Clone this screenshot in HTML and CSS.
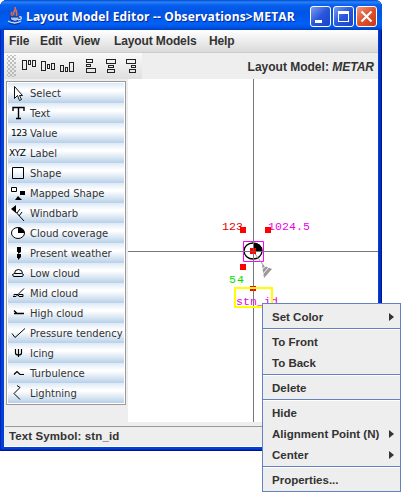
FILE: index.html
```html
<!DOCTYPE html>
<html lang="en">
<head>
<meta charset="utf-8">
<title>Layout Model Editor</title>
<link rel="stylesheet" href="styles.css">
</head>
<body>
<div class="window">
  <header class="titlebar">
    <svg class="logo" width="16" height="18" viewBox="0 0 16 18" fill="none">
      <path d="M8 0c2 3-3 4-1 8M10 3c-3 2 2 3-1 6M5 5c-2 2 1 3 0 4" stroke="#f36b2c" stroke-width="1.5"/>
      <path d="M3 10h9v3q-4 3-8 0z" fill="#a9c4f0" stroke="#182c78"/>
      <path d="M12 10q3-1 2 2l-3 1M1 14q7 4 13 0" stroke="#d4e0f8" stroke-width="1.3"/>
      <path d="M2 16.500q6 2 11 0" stroke="#182c78"/>
    </svg>
    <h1 class="title">Layout Model Editor -- Observations&gt;METAR</h1>
    <div class="controls">
      <span class="control"><svg width="19" height="19"><path d="M4 13h7v3H4z" fill="#fff"/></svg></span>
      <span class="control"><svg width="19" height="19"><path d="M4 4h11v11H4zM5 7v7h9V7z" fill="#fff" fill-rule="evenodd"/></svg></span>
      <span class="control close"><svg width="19" height="19"><path d="M4.500 4.500l10 10M14.500 4.500l-10 10" stroke="#fff" stroke-width="2.200"/></svg></span>
    </div>
  </header>
  <nav class="menubar"><span class="m-file">File</span><span class="m-edit">Edit</span><span class="m-view">View</span><span class="m-models">Layout Models</span><span>Help</span></nav>
  <div class="toolbar">
    <div class="tools">
      <span class="grip"></span>
      <svg width="120" height="20" viewBox="20 55 120 20" fill="none" stroke="#222" shape-rendering="crispEdges">
        <path d="M22.500 59.500h4v9h-4zM28.500 59.500h2v4h-2zM32.500 59.500h3v6h-3z"/>
        <path d="M41.500 60.500h4v9h-4zM47.500 63.500h2v4h-2zM51.500 62.500h3v6h-3z"/>
        <path d="M60.500 64.500h3v6h-3zM65.500 66.500h2v4h-2zM69.500 61.500h4v9h-4z"/>
        <path d="M86.500 58.500h6v3h-6zM86.500 63.500h4v2h-4zM86.500 67.500h9v4h-9z"/>
        <path d="M106.500 58.500h9v4h-9zM108.500 64.500h5v2h-5zM107.500 68.500h7v3h-7z"/>
        <path d="M126.500 58.500h9v4h-9zM131.500 64.500h4v2h-4zM129.500 68.500h6v3h-6z"/>
      </svg>
    </div>
    <div class="model">Layout Model: <i>METAR</i></div>
  </div>
  <main class="workspace">
    <ul class="palette">
      <li><svg width="20" height="20"><path d="M6.500 3.500v12l3-3 2 5 2-1-2-4h3z" fill="#fff" stroke="#111"/></svg><span>Select</span></li>
      <li><svg width="20" height="20"><path d="M5 8V4.500h11V8M10.500 5v11M8 15.500h5" fill="none" stroke="#000" stroke-width="1.400"/></svg><span>Text</span></li>
      <li><b class="glyph digits">123</b><span>Value</span></li>
      <li><b class="glyph">XYZ</b><span>Label</span></li>
      <li><svg width="20" height="20"><path d="M4.500 4.500h11v11h-11z" fill="none" stroke="#000"/></svg><span>Shape</span></li>
      <li><svg width="20" height="20"><path d="M3.500 4.500h5v4h-5z" fill="#fff" stroke="#000"/><path d="M12 8h5v4h-5zM10 13l4 4H7z"/></svg><span>Mapped Shape</span></li>
      <li><svg width="20" height="20"><path d="M8 2v8L3 6z"/><path d="M6 7l10 11M9 10l3-4M11 13l3-4" stroke="#000" fill="none"/></svg><span>Windbarb</span></li>
      <li><svg width="20" height="20"><ellipse cx="10" cy="10" rx="6.500" ry="5.500" fill="#fff" stroke="#000"/><path d="M10 10V4.500q6 0 6.500 5.500z"/></svg><span>Cloud coverage</span></li>
      <li><svg width="20" height="20"><path d="M9 4h4v5l-3 2V9H9zM9 11h4v3l-3 3v-2H9z"/></svg><span>Present weather</span></li>
      <li><svg width="20" height="20" class="line"><path d="M5.500 13.500h9l1-2-2-1h-7l-2 1zM6.500 10.500q0-4 4-4t4 4"/></svg><span>Low cloud</span></li>
      <li><svg width="20" height="20" class="line"><path d="M5 13.500h3l8-8M6 12.500v-1h4l1 2h4v-2h-4"/></svg><span>Mid cloud</span></li>
      <li><svg width="20" height="20" class="line"><path d="M6 7.500l3 3M6 10.500h10" stroke-width="1.400"/></svg><span>High cloud</span></li>
      <li><svg width="20" height="20" class="line"><path d="M4 10.500l3 4 10-9"/></svg><span>Pressure tendency</span></li>
      <li><svg width="20" height="20" class="line"><path d="M7.500 6v4q0 2 3 2t3-2V6M10.500 6v8" stroke-width="1.200"/></svg><span>Icing</span></li>
      <li><svg width="20" height="20" class="line"><path d="M6 11.500l3-3 3 3h4" stroke-width="1.200"/></svg><span>Turbulence</span></li>
      <li><svg width="20" height="20" class="line"><path d="M9 2.500l3 2-6 6 6 6"/></svg><span>Lightning</span></li>
    </ul>
    <svg class="canvas" width="250" height="343" viewBox="128 79 250 343">
      <g class="station" font-size="11.500">
        <text x="222" y="230" fill="#e00000" textLength="21">123</text>
        <text x="268" y="230" fill="#e800e8" textLength="42">1024.5</text>
        <text x="229" y="283" fill="#00e000" textLength="15">54</text>
        <text x="236" y="305" fill="#e800e8" textLength="42">stn_id</text>
      </g>
      <ellipse cx="253" cy="251" rx="9" ry="8" fill="#fff" stroke="#000" stroke-width="1.400"/>
      <path d="M253 251v-8q9 0 9 8z"/>
      <path d="M243.500 241.500h20v20h-20z" fill="none" stroke="#ff00ff"/>
      <path d="M253 251l13 18" stroke="#999"/>
      <path d="M262 265l10 4-8 9z" fill="#999"/><path d="M261 270l6-5M262 275l7-8" stroke="#fff"/>
      <path d="M253.500 79v343M128 251.500h250" stroke="#777" shape-rendering="crispEdges"/>
      <g fill="#f00"><path d="M240 227h6v6h-6zM265 227h6v6h-6zM240 264h6v6h-6zM250 248h6v6h-6zM250 286h6v5h-6z"/></g>
      <path d="M253.500 79v343M128 251.500h250" stroke="#777" stroke-opacity=".5" shape-rendering="crispEdges"/>
      <path d="M235 288h37v19h-37z" fill="none" stroke="#ff0" stroke-width="2"/>
    </svg>
  </main>
  <footer class="status">Text Symbol: stn_id</footer>
</div>
<div class="popup">
  <div class="group"><div class="item sub">Set Color</div></div>
  <div class="group"><div class="item">To Front</div><div class="item">To Back</div></div>
  <div class="group"><div class="item">Delete</div></div>
  <div class="group"><div class="item">Hide</div><div class="item sub">Alignment Point (N)</div><div class="item sub">Center</div></div>
  <div class="group"><div class="item">Properties...</div></div>
</div>
</body>
</html>
```
FILE: styles.css
```css
* { box-sizing: border-box; }
body { margin: 0; width: 401px; height: 492px; overflow: hidden; background: #fff; color: #333; font: bold 12px/1 "Liberation Sans", Arial, sans-serif; }
.window { width: 382px; height: 451px; padding: 0 4px 4px; border-radius: 7px 7px 0 0; background: #0040d8; box-shadow: inset 1px 0 #0024b8, inset -1px -1px #001490, inset -3px -2px #0030c0; display: flex; flex-direction: column; overflow: hidden; }
.titlebar { height: 30px; margin: 0 -4px; padding: 0 5px 0 7px; display: flex; align-items: center; background: linear-gradient(#0048cc 0, #2a83fa 2px, #0860ee 5px, #0054e3 12px, #0060f8 24px, #0050dc 28px, #003cc0); flex: none; }
.logo { flex: none; margin-top: 2px; }
.title { margin: 4px 0 0 3px; flex: 1; white-space: nowrap; font: bold 12px/16px "Open Sans", sans-serif; color: #fff; text-shadow: 1px 1px #0a2890; letter-spacing: 0.15px; }
.controls { display: flex; gap: 2px; margin-top: 3px; }
.control { width: 21px; height: 21px; border: 1px solid #fff; border-radius: 3px; background: linear-gradient(135deg, #7c9cf0, #2856dc 50%, #1844c8); }
.control svg { display: block; }
.close { background: linear-gradient(135deg, #f0997c, #e0502c 50%, #c83c14); }
.menubar { height: 23px; flex: none; display: flex; align-items: center; padding: 0 0 1px 5px; background: linear-gradient(#fff, #dadada); border-bottom: 1px solid #ccc; letter-spacing: -0.12px; }
.m-file { width: 31px; }
.m-edit { width: 33px; }
.m-view { width: 41px; }
.m-models { width: 95px; }
.toolbar { height: 26px; flex: none; display: flex; justify-content: space-between; background: #eee; }
.tools { width: 138px; display: flex; align-items: center; padding-left: 3px; background: linear-gradient(#fafafa, #dfdfdf); }
.grip { width: 9px; height: 22px; margin-right: 4px; background: radial-gradient(circle, #999 0.5px, transparent 1px) 0 0 / 4px 4px, radial-gradient(circle, #999 0.5px, transparent 1px) 2px 2px / 4px 4px; }
.model { padding: 8px 4px 0 0; font-size: 12px; white-space: nowrap; }
.workspace { height: 343px; flex: none; display: flex; justify-content: space-between; background: #eee; }
.palette { list-style: none; width: 120px; height: 324px; margin: 2px 0 0 2px; padding: 1px; border: 1px solid #999; background: #fff; font: normal 10px/1 "DejaVu Sans", Verdana, sans-serif; }
.palette li { height: 20px; display: flex; align-items: center; background: linear-gradient(#dce9f6 0, #fff 35%, #fff 40%, #b8d0e8); white-space: nowrap; }
.palette svg { flex: none; }
.palette span { margin-left: 2px; padding-top: 2px; }
.line { fill: none; stroke: #000; }
.glyph { width: 20px; font-size: 9px; font-weight: normal; letter-spacing: -0.5px; color: #000; padding-left: 1px; }
.digits { padding-left: 3px; }
.canvas { display: block; background: #fff; }
.station { font-family: "Liberation Mono", monospace; font-weight: normal; }
.status { flex: 1; padding: 9px 0 0 5px; background: linear-gradient(#999, #999) 1px 4px / 100% 1px no-repeat #eee; border-bottom: 1px solid #fff; font-size: 11.500px; letter-spacing: 0.1px; }
.popup { position: absolute; left: 262px; top: 303px; width: 139px; height: 189px; border: 1px solid #6382bf; background: #eee; font-size: 11.500px; }
.group { padding-top: 3px; }
.group + .group { border-top: 1px solid #6382bf; box-shadow: inset 0 1px #fff; }
.item { height: 21px; padding: 0 6px 0 9px; display: flex; align-items: center; justify-content: space-between; white-space: nowrap; }
.sub::after { content: ""; margin-top: -2px; border: 4.5px solid transparent; border-left: 5px solid #333; border-right: 0; }
```
